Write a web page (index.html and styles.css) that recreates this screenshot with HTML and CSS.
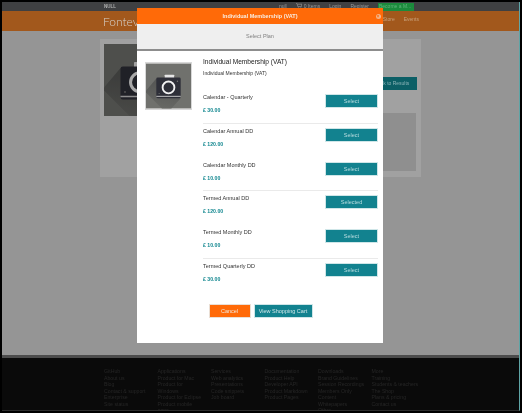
FILE: index.html
```html
<!DOCTYPE html>
<html lang="en">
<head>
<meta charset="utf-8">
<title>Individual Membership (VAT)</title>
<link rel="stylesheet" href="styles.css">
</head>
<body>
<div class="frame">
  <header class="topbar">
    <span class="null-left">NULL</span>
    <nav class="topnav">
      <span>null</span>
      <span class="cart"><svg class="cart-icon" viewBox="0 0 10 10"><path d="M0 1h2l1 5h6l1-4H3" fill="none" stroke="#a5a5a5" stroke-width="1"/><circle cx="4" cy="8.5" r="1" fill="#a5a5a5"/><circle cx="8" cy="8.5" r="1" fill="#a5a5a5"/></svg>0 Items</span>
      <span>Login</span>
      <span>Register</span>
      <span class="become">Become a M...</span>
    </nav>
  </header>
  <div class="brandbar">
    <span class="logo">Fontev</span>
    <nav class="brandnav"><span>Store</span><span>Events</span></nav>
  </div>
  <main class="page">
    <section class="card">
      <div class="hero">
        <svg class="photo" viewBox="0 0 48 48"><use href="#camera"/></svg>
      </div>
      <span class="back">Back to Results</span>
      <div class="panel"></div>
    </section>
  </main>
  <footer class="footer">
    <ul><li>GitHub</li><li>About us</li><li>Blog</li><li>Contact &amp; support</li><li>Enterprise</li><li>Site status</li></ul>
    <ul><li>Applications</li><li>Product for Mac</li><li>Product for</li><li>Windows</li><li>Product for Eclipse</li><li>Product mobile</li><li>apps</li></ul>
    <ul><li>Services</li><li>Web analytics</li><li>Presentations</li><li>Code snippets</li><li>Job board</li></ul>
    <ul><li>Documentation</li><li>Product Help</li><li>Developer API</li><li>Product Markdown</li><li>Product Pages</li></ul>
    <ul><li>Downloads</li><li>Brand Guidelines</li><li>Session Recordings</li><li>Members Only</li><li>Content</li><li>Whitepapers</li><li>Other</li></ul>
    <ul><li>More</li><li>Training</li><li>Students &amp; teachers</li><li>The Shop</li><li>Plans &amp; pricing</li><li>Contact us</li></ul>
  </footer>
  <div class="modal">
    <div class="modal-head">Individual Membership (VAT)<span class="close">×</span></div>
    <div class="modal-sub">Select Plan</div>
    <div class="modal-body">
      <div class="thumb"><svg class="photo" viewBox="0 0 48 48">
        <defs>
        <linearGradient id="long-shadow" x1="0.4" y1="0.2" x2="0.2" y2="1">
          <stop offset="0" stop-color="#575856"/>
          <stop offset="1" stop-color="#696a66"/>
        </linearGradient>
        <g id="camera">
          <rect width="48" height="48" fill="#70716d"/>
          <path d="M11 16 0 29v2l17 17h10l10-11z" fill="url(#long-shadow)"/>
          <rect x="20" y="12" width="10" height="4" rx=".5" fill="#e6e6e6"/>
          <rect x="11" y="15" width="26" height="22" rx="1.500" fill="#2e2f38"/>
          <rect x="11" y="34.500" width="26" height="1" fill="#c9c9c9"/>
          <circle cx="24" cy="25.500" r="6.300" fill="#2e2f38" stroke="#f2f2f2" stroke-width="2"/>
          <circle cx="33.500" cy="19" r=".8" fill="#777"/>
          <circle cx="14" cy="32" r=".6" fill="#777"/>
        </g></defs>
        <use href="#camera"/>
      </svg></div>
      <div class="plans">
        <h2 class="plan-title">Individual Membership (VAT)</h2>
        <p class="plan-desc">Individual Membership (VAT)</p>
        <div class="plan">
          <div><div class="plan-name">Calendar - Quarterly</div><div class="price">£ 30.00</div></div>
          <span class="btn">Select</span>
        </div>
        <div class="plan plan-rule">
          <div><div class="plan-name">Calendar Annual DD</div><div class="price">£ 120.00</div></div>
          <span class="btn">Select</span>
        </div>
        <div class="plan">
          <div><div class="plan-name">Calendar Monthly DD</div><div class="price">£ 10.00</div></div>
          <span class="btn">Select</span>
        </div>
        <div class="plan plan-rule">
          <div><div class="plan-name">Termed Annual DD</div><div class="price">£ 120.00</div></div>
          <span class="btn">Selected</span>
        </div>
        <div class="plan">
          <div><div class="plan-name">Termed Monthly DD</div><div class="price">£ 10.00</div></div>
          <span class="btn">Select</span>
        </div>
        <div class="plan plan-rule">
          <div><div class="plan-name">Termed Quarterly DD</div><div class="price">£ 30.00</div></div>
          <span class="btn">Select</span>
        </div>
        <div class="actions">
          <span class="btn-cancel">Cancel</span>
          <span class="btn-cart">View Shopping Cart</span>
        </div>
      </div>
    </div>
  </div>
</div>
</body>
</html>
```
FILE: styles.css
```css
* { box-sizing: border-box; }
html, body { margin: 0; padding: 0; }
body { width: 522px; height: 413px; overflow: hidden; background: #000; font-family: "Liberation Sans", Arial, sans-serif; }
.frame { position: relative; width: 518px; height: 409px; margin: 2px 0 0 2px; display: flex; flex-direction: column; overflow: hidden; background: #0a0a0a; border-right: 1px solid #5fa5a6; border-bottom: 1px solid #2c2c2c; filter: blur(.3px); }
.topbar { height: 9px; flex: none; background: #3f4042; display: flex; justify-content: space-between; font-size: 5px; line-height: 9px; color: #9a9a9a; padding-left: 102px; padding-right: 105px; }
.null-left { font-weight: bold; font-size: 4.5px; color: #b0b0b0; }
.topnav { display: flex; gap: 9px; }
.cart-icon { width: 6px; height: 6px; margin-right: 2px; vertical-align: -1px; }
.become { background: #1b8a3c; color: #5fb47a; padding: 0 1px; width: 36px; margin-top: 1px; height: 8px; line-height: 7px; white-space: nowrap; overflow: hidden; }
.brandbar { height: 20px; flex: none; background: #a2581c; display: flex; justify-content: space-between; align-items: center; padding-left: 101px; padding-right: 100px; }
.logo { font-family: Lato, "Liberation Sans", sans-serif; font-weight: 300; font-size: 12px; margin-top: 1px; color: #d6d2cc; }
.brandnav { display: flex; gap: 9px; font-size: 5px; margin-top: -4px; color: #c9a27c; }
.page { flex: 1; background: #959595; padding: 8px 0 0 98px; border-bottom: 3px solid #4c4c4c; }
.card { position: relative; width: 321px; height: 138px; background: #a1a1a1; padding: 5px 4px; }
.hero { width: 72px; height: 72px; }
.hero .photo { width: 72px; height: 72px; display: block; filter: brightness(.7); }
.back { position: absolute; right: 4px; top: 38px; width: 50px; height: 13px; background: #0c5f66; color: #8cb5b8; font-size: 5px; line-height: 13px; text-align: center; }
.panel { position: absolute; right: 5px; top: 74px; width: 60px; height: 58px; background: #8f8f8f; }
.footer { flex: none; height: 52px; background: #0a0a0a; padding: 10px 0 0 102px; display: flex; overflow: hidden; color: #262626; font-size: 5.2px; line-height: 6.5px; }
.footer ul { list-style: none; margin: 0; padding: 0; width: 53.5px; flex: none; }
.modal { position: absolute; left: 135px; top: 6px; width: 246px; height: 335px; background: #fff; }
.modal-head { position: relative; height: 16px; background: #ff6a08; color: #f9ece0; font-size: 5.5px; font-weight: bold; line-height: 16px; text-align: center; }
.close { position: absolute; right: 2.5px; top: 5.5px; width: 5px; height: 5px; border-radius: 50%; background: #f4b68c; color: #ff6a08; font-size: 5px; line-height: 5px; }
.modal-sub { height: 27px; background: #efefef; border-bottom: 2px solid #8d8d8d; color: #808080; font-size: 5.5px; line-height: 24px; text-align: center; }
.modal-body { display: flex; padding: 7px 5px 0 8px; }
.thumb { width: 47px; height: 48px; flex: none; margin-top: 4px; border: 1px solid #d8d8d8; }
.thumb .photo { width: 100%; height: 100%; display: block; }
.plans { margin-left: 11px; flex: 1; }
.plan-title { margin: 0; font-size: 6.6px; font-weight: normal; color: #222; line-height: 8px; }
.plan-desc { margin: 3.5px 0 0; font-size: 5px; color: #333; line-height: 7px; height: 19.5px; }
.plan { display: flex; justify-content: space-between; height: 33.8px; padding-top: 4px; border-top: 1px solid transparent; }
.plan-rule { border-top-color: #eaeaea; }
.plan-name { font-size: 5.5px; line-height: 7px; color: #333; }
.price { margin-top: 6px; font-size: 5.2px; font-weight: bold; line-height: 7px; color: #12878f; }
.btn { width: 53px; height: 14px; background: #12828f; border: 1px solid #cfe6e8; color: #b8dcdf; font-size: 5.5px; line-height: 12px; text-align: center; }
.actions { display: flex; gap: 3px; margin-top: 12px; margin-left: 5.5px; }
.btn-cancel, .btn-cart { height: 14px; border: 1px solid #eadfd5; font-size: 5.5px; line-height: 12px; text-align: center; color: #f2e8dc; }
.btn-cancel { width: 42px; background: #ff6a08; }
.btn-cart { width: 59px; background: #12828f; border-color: #cfe6e8; color: #cfe6e8; }
```
